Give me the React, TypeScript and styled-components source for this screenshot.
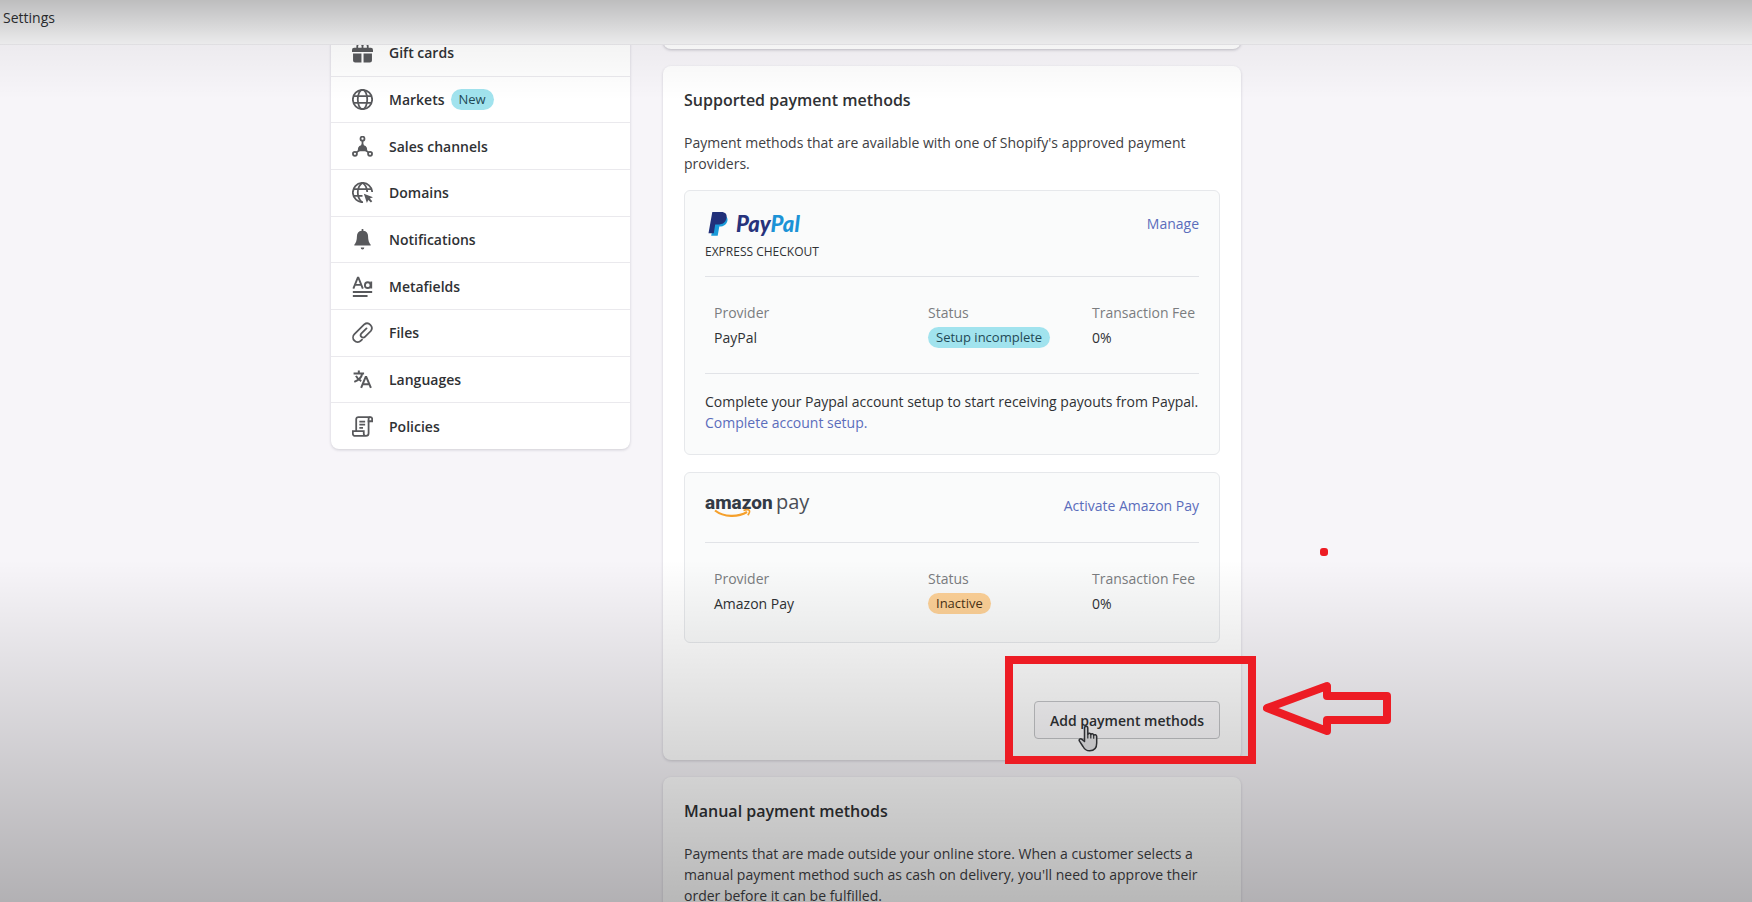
import React from "react";
import styled, { createGlobalStyle } from "styled-components";

const GlobalStyle = createGlobalStyle`
  * { box-sizing: border-box; }
  body {
    margin: 0;
    background: #f7f5f9;
    color: #2f3134;
    font-family: "Open Sans", "Noto Sans", sans-serif;
    font-size: 14px;
    line-height: 21px;
  }
`;

const RED = "#ed1c24";

const Page = styled.div`
  position: relative;
  height: 100vh;
  overflow: hidden;
`;

const Header = styled.header`
  position: relative;
  z-index: 2;
  display: flex;
  align-items: center;
  height: 45px;
  padding: 0 3px 10px;
  background: #f6f6f7;
  border-bottom: 1px solid #eae9ec;
`;

const HeaderTitle = styled.h1`
  margin: 0;
  font-size: 14px;
  font-weight: 500;
`;

const Vignette = styled.div`
  position: absolute;
  inset: 0;
  z-index: 3;
  pointer-events: none;
  background:
    linear-gradient(to bottom, rgba(0, 0, 0, 0.23) 0, rgba(0, 0, 0, 0.045) 45px, transparent 100px),
    linear-gradient(to bottom, transparent 62%, rgba(0, 0, 0, 0.28) 100%);
`;

const Content = styled.div`
  display: grid;
  grid-template-columns: 299px 578px;
  column-gap: 33px;
  align-items: start;
  margin: -16px 0 0 331px;
`;

const SettingsNav = styled.nav`
  background: #fff;
  border-radius: 0 0 8px 8px;
  box-shadow: 0 1px 3px rgba(30, 30, 50, 0.18);
`;

const NavList = styled.ul`
  display: grid;
  grid-auto-rows: 1fr;
  height: 420px;
  margin: 0;
  padding: 0;
  list-style: none;
`;

const NavItem = styled.li`
  display: grid;
  & + & { border-top: 1px solid #eae9ed; }
`;

const NavLink = styled.a`
  display: flex;
  align-items: center;
  padding: 0 21px;
  color: inherit;
  font-weight: 600;
  text-decoration: none;
`;

const NavIcon = styled.svg`
  width: 21px;
  height: 21px;
  margin-right: 16px;
  color: #58595c;
`;

const Badge = styled.span<{ $tone: "info" | "warning" }>`
  display: inline-block;
  padding: 0 8px;
  border-radius: 11px;
  background: ${(p) => (p.$tone === "info" ? "#a1e3ee" : "#fdd197")};
  color: ${(p) => (p.$tone === "info" ? "#1f4a56" : "#4a3315")};
  font-size: 13px;
  font-weight: 400;
  line-height: 21px;
`;

const NavBadge = styled(Badge)`
  margin-left: 6px;
`;

const Column = styled.main`
  display: grid;
  row-gap: 17px;
`;

const Card = styled.section`
  position: relative;
  padding: 22px 21px 21px;
  background: #fff;
  border-radius: 8px;
  box-shadow: 0 1px 3px rgba(30, 30, 50, 0.18);
`;

const CardTail = styled.div`
  height: 20px;
  background: #fff;
  border-radius: 0 0 8px 8px;
  box-shadow: 0 1px 3px rgba(30, 30, 50, 0.25);
`;

const CardTitle = styled.h2`
  margin: 0 0 20px;
  font-size: 16px;
  font-weight: 600;
  line-height: 24px;
`;

const CardText = styled.p`
  margin: 0 0 16px;
  color: #3e4043;
`;

const Methods = styled.div`
  display: grid;
  row-gap: 17px;
`;

const Method = styled.article`
  padding: 20px 20px 0;
  background: #fafbfb;
  border: 1px solid #e6e8eb;
  border-radius: 6px;
`;

const MethodHeader = styled.div`
  display: flex;
  justify-content: space-between;
  align-items: flex-start;
  border-bottom: 1px solid #e1e3e7;
`;

const MethodBrand = styled.div<{ $gap: number }>`
  padding-bottom: ${(p) => p.$gap}px;
`;

const BrandLogo = styled.svg`
  display: block;
  height: 26px;
  overflow: visible;
`;

const BrandCaption = styled.div`
  margin-top: 5px;
  font-size: 12px;
  line-height: 20px;
`;

const TextLink = styled.a`
  color: #5a6dbb;
  text-decoration: none;
`;

const HeaderLink = styled(TextLink)`
  line-height: 26px;
`;

const Details = styled.dl`
  display: grid;
  grid-template-columns: 214fr 164fr 107fr;
  margin: 0;
  padding: 25px 0 0 9px;
`;

const Detail = styled.div`
  display: grid;
  justify-items: start;
  row-gap: 4px;
  white-space: nowrap;
`;

const Term = styled.dt`
  color: #7b7d80;
`;

const Value = styled.dd`
  display: flex;
  margin: 0;
`;

const MethodNote = styled.p`
  margin: 25px 0 0;
  padding: 17px 0 21px;
  border-top: 1px solid #e1e3e7;
`;

const MethodEnd = styled.div`
  height: 28px;
`;

const Actions = styled.div`
  display: flex;
  justify-content: flex-end;
  margin-top: 58px;
`;

const Highlighted = styled.div`
  position: relative;
`;

const AddButton = styled.button`
  display: block;
  height: 38px;
  padding: 0 15px;
  background: #fbfafc;
  border: 1px solid #c4c5c8;
  border-radius: 4px;
  color: inherit;
  font: inherit;
  font-weight: 600;
`;

const HighlightBox = styled.div`
  position: absolute;
  z-index: 4;
  inset: -45px -36px -25px -29px;
  border: 8px solid ${RED};
  pointer-events: none;
`;

const HighlightArrow = styled.svg`
  position: absolute;
  z-index: 4;
  left: 229px;
  top: -20px;
  width: 128px;
  height: 54px;
`;

const HandCursor = styled.svg`
  position: absolute;
  left: 44px;
  top: 24px;
  width: 20px;
  height: 27px;
`;

const RedDot = styled.div`
  position: absolute;
  z-index: 4;
  left: 657px;
  top: 482px;
  width: 8px;
  height: 8px;
  border-radius: 3px;
  background: ${RED};
`;

const line = { fill: "none", stroke: "currentColor", strokeWidth: 1.7 } as const;

const icons: Record<string, React.ReactNode> = {
  gift: (
    <g>
      <path fill="currentColor" d="M0 9.500V7.500a2 2 0 0 1 2-2h16a2 2 0 0 1 2 2v2z" />
      <path {...line} d="M5 6V4a2.500 2.500 0 0 1 5 0v2M10 6V4a2.500 2.500 0 0 1 5 0v2" />
      <path fill="currentColor" d="M1 11h8v8.500H3a2 2 0 0 1-2-2zM11 11h8v6.500a2 2 0 0 1-2 2h-6z" />
    </g>
  ),
  globe: (
    <g {...line}>
      <circle cx="10" cy="10" r="9.200" />
      <ellipse cx="10" cy="10" rx="4.500" ry="9.200" />
      <path d="M1.500 6.800h17M1.500 13.200h17" />
    </g>
  ),
  channels: (
    <g>
      <g {...line}>
        <circle cx="10" cy="2.500" r="1.900" />
        <circle cx="2.800" cy="17" r="1.900" />
        <circle cx="17.200" cy="17" r="1.900" />
        <path d="M10 4.500V10M4.300 15.600l3-2.300M15.700 15.600l-3-2.300" />
      </g>
      <path fill="currentColor" d="M10 6.500l1.300 2.300a4 4 0 0 1 2.700 5.700H6a4 4 0 0 1 2.700-5.700z" />
    </g>
  ),
  domains: (
    <g>
      <g {...line}>
        <path d="M10.500 19.200A9.200 9.200 0 1 1 19.200 9.500" />
        <path d="M9.300 19C7 17 5.500 14 5.500 10S7 2.800 10 .8c2.800 2 4.300 4.700 4.500 8.700M1.500 6.800h17M1.500 13.200h8.500" />
      </g>
      <path fill="currentColor" d="M11.300 11.300l8.700 3.200-3 1.300 2.300 2.500-1.300 1.300-2.500-2.400-1.300 2.800z" />
    </g>
  ),
  bell: (
    <path
      fill="currentColor"
      d="M9.200 0h1.600v1.700A5.300 5.300 0 0 1 15.300 7c0 4 1 6.500 2.500 8v.8H2.200V15c1.500-1.500 2.500-4 2.500-8a5.300 5.300 0 0 1 4.500-5.300zM8.300 17.500h3.400a1.700 2 0 0 1-3.400 0z"
    />
  ),
  metafields: (
    <g {...line} strokeWidth={1.800}>
      <path d="M1.300 12L5.500 1.500h.6L10.300 12M2.800 8.500h6" />
      <circle cx="15" cy="8.700" r="2.700" />
      <path d="M18.300 5.200V12M.8 15.200h18.400M.8 19h14" />
    </g>
  ),
  clip: (
    <path
      {...line}
      strokeLinecap="round"
      d="M9.500 16.800l-1 1a4.300 4.300 0 0 1-6.200-6.200l9.300-9.300a4.500 4.500 0 0 1 6.300 6.300l-5.600 5.600a2.300 2.300 0 0 1-3.300-3.300l4.800-4.800"
    />
  ),
  languages: (
    <g {...line} strokeWidth={1.900}>
      <path d="M1.500 4.200h10M6.500 1.500v2.700M9.700 4.500C9 8 6 10.800 2.200 12.300M3.800 6.500c1 2.200 2.700 3.800 5 5" />
      <path d="M8.700 18L13 7.500h.6L18 18M10.300 14.500h6" />
    </g>
  ),
  policies: (
    <g {...line}>
      <path d="M4 14V3a2 2 0 0 1 2-2h11.500a1.700 1.700 0 0 1 1.700 1.700V5h-3.400v11.500a2.500 2.500 0 0 1-2.500 2.500H3a2.200 2.200 0 0 1-2.200-2.200V14.500h10.400v2.300A2.200 2.200 0 0 0 13.300 19" />
      <path d="M17.500 1a1.700 1.700 0 0 0-1.700 1.700V6M7 5.300h5.500M7 8.300h5.500M7 11.300h3.500" />
    </g>
  ),
};

const navItems = [
  { icon: "gift", label: "Gift cards" },
  { icon: "globe", label: "Markets", badge: "New" },
  { icon: "channels", label: "Sales channels" },
  { icon: "domains", label: "Domains" },
  { icon: "bell", label: "Notifications" },
  { icon: "metafields", label: "Metafields" },
  { icon: "clip", label: "Files" },
  { icon: "languages", label: "Languages" },
  { icon: "policies", label: "Policies" },
];

function PayPalLogo() {
  return (
    <BrandLogo width="104" viewBox="0 0 104 26" role="img" aria-label="PayPal">
      <path fill="#1a9bd9" d="M10 5h10.500c3 2 2.600 6-.4 8.700-1.500 1.300-3.400 1.800-5.800 1.800l-1.600 9.300H6.200z" />
      <path fill="#21307a" d="M7.300 1h9c4 0 6 2.300 5.200 6-.8 4.500-4 6.500-8.400 6.500H10.200l-1.400 8.800H3.500z" />
      <text x="31" y="21" fontFamily="Lato, sans-serif" fontSize="22" fontStyle="italic" fontWeight="900">
        <tspan fill="#27337c">Pay</tspan>
        <tspan fill="#1c93d6">Pal</tspan>
      </text>
    </BrandLogo>
  );
}

function AmazonPayLogo() {
  return (
    <BrandLogo width="104" viewBox="0 0 104 26" role="img" aria-label="amazon pay">
      <text x="0" y="16" fill="#333a45" fontFamily="Roboto, sans-serif" fontSize="19" fontWeight="800">amazon</text>
      <text x="71" y="16" fill="#4a4e56" fontFamily="Open Sans, sans-serif" fontSize="20">pay</text>
      <path fill="none" stroke="#f5a02c" strokeWidth="2.200" d="M10 17.500c9 7 23 7 32 1.500" />
      <path fill="none" stroke="#f5a02c" strokeWidth="1.600" d="M38.500 17.500c3-1.300 5.500-1.200 6 .2.400 1.200-.5 3-1.700 4.600" />
    </BrandLogo>
  );
}

function MethodDetails(props: { provider: string; fee: string; status: React.ReactNode }) {
  return (
    <Details>
      <Detail>
        <Term>Provider</Term>
        <Value>{props.provider}</Value>
      </Detail>
      <Detail>
        <Term>Status</Term>
        <Value>{props.status}</Value>
      </Detail>
      <Detail>
        <Term>Transaction Fee</Term>
        <Value>{props.fee}</Value>
      </Detail>
    </Details>
  );
}

export default function App() {
  return (
    <Page>
      <GlobalStyle />
      <Header>
        <HeaderTitle>Settings</HeaderTitle>
      </Header>
      <Content>
        <SettingsNav aria-label="Settings">
          <NavList>
            {navItems.map((item) => (
              <NavItem key={item.label}>
                <NavLink href="#">
                  <NavIcon viewBox="0 0 20 20" aria-hidden="true">{icons[item.icon]}</NavIcon>
                  {item.label}
                  {item.badge && <NavBadge $tone="info">{item.badge}</NavBadge>}
                </NavLink>
              </NavItem>
            ))}
          </NavList>
        </SettingsNav>

        <Column>
          <CardTail />
          <Card>
            <CardTitle>Supported payment methods</CardTitle>
            <CardText>
              Payment methods that are available with one of Shopify's approved payment providers.
            </CardText>
            <Methods>
              <Method>
                <MethodHeader>
                  <MethodBrand $gap={14}>
                    <PayPalLogo />
                    <BrandCaption>EXPRESS CHECKOUT</BrandCaption>
                  </MethodBrand>
                  <HeaderLink href="#">Manage</HeaderLink>
                </MethodHeader>
                <MethodDetails
                  provider="PayPal"
                  status={<Badge $tone="info">Setup incomplete</Badge>}
                  fee="0%"
                />
                <MethodNote>
                  Complete your Paypal account setup to start receiving payouts from Paypal.{" "}
                  <TextLink href="#">Complete account setup.</TextLink>
                </MethodNote>
              </Method>
              <Method>
                <MethodHeader>
                  <MethodBrand $gap={23}>
                    <AmazonPayLogo />
                  </MethodBrand>
                  <HeaderLink href="#">Activate Amazon Pay</HeaderLink>
                </MethodHeader>
                <MethodDetails
                  provider="Amazon Pay"
                  status={<Badge $tone="warning">Inactive</Badge>}
                  fee="0%"
                />
                <MethodEnd />
              </Method>
            </Methods>
            <Actions>
              <Highlighted>
                <AddButton type="button">Add payment methods</AddButton>
                <HandCursor viewBox="0 0 20 27" aria-hidden="true">
                  <path
                    fill="#e4e4e6"
                    stroke="#34363a"
                    strokeWidth="1.500"
                    strokeLinejoin="round"
                    d="M6.500 16.500V3.200C6.500.6 9.800.6 9.800 3.200v6c.4-1.500 2.800-1.300 3 .4.600-1.300 2.700-1 2.900.7.700-1 3-.7 3 1.300v6.400c0 5-2.700 7.800-7 7.800-3.500 0-5.200-1.500-6.700-4.300l-3.500-5.300c-1-1.700.9-3.200 2.500-1.800z"
                  />
                  <path fill="none" stroke="#34363a" strokeWidth="1.200" d="M9.800 9v4.500M12.800 9.600v4M15.700 10.500v3.300" />
                </HandCursor>
                <HighlightBox />
                <HighlightArrow viewBox="0 0 128 54" aria-hidden="true">
                  <path
                    fill="none"
                    stroke={RED}
                    strokeWidth="8"
                    strokeLinejoin="round"
                    d="M4 27L64 5v10h60v24H64v11z"
                  />
                </HighlightArrow>
              </Highlighted>
            </Actions>
            <RedDot />
          </Card>
          <Card>
            <CardTitle>Manual payment methods</CardTitle>
            <CardText>
              Payments that are made outside your online store. When a customer selects a manual payment
              method such as cash on delivery, you'll need to approve their order before it can be fulfilled.
            </CardText>
          </Card>
        </Column>
      </Content>
      <Vignette />
    </Page>
  );
}
